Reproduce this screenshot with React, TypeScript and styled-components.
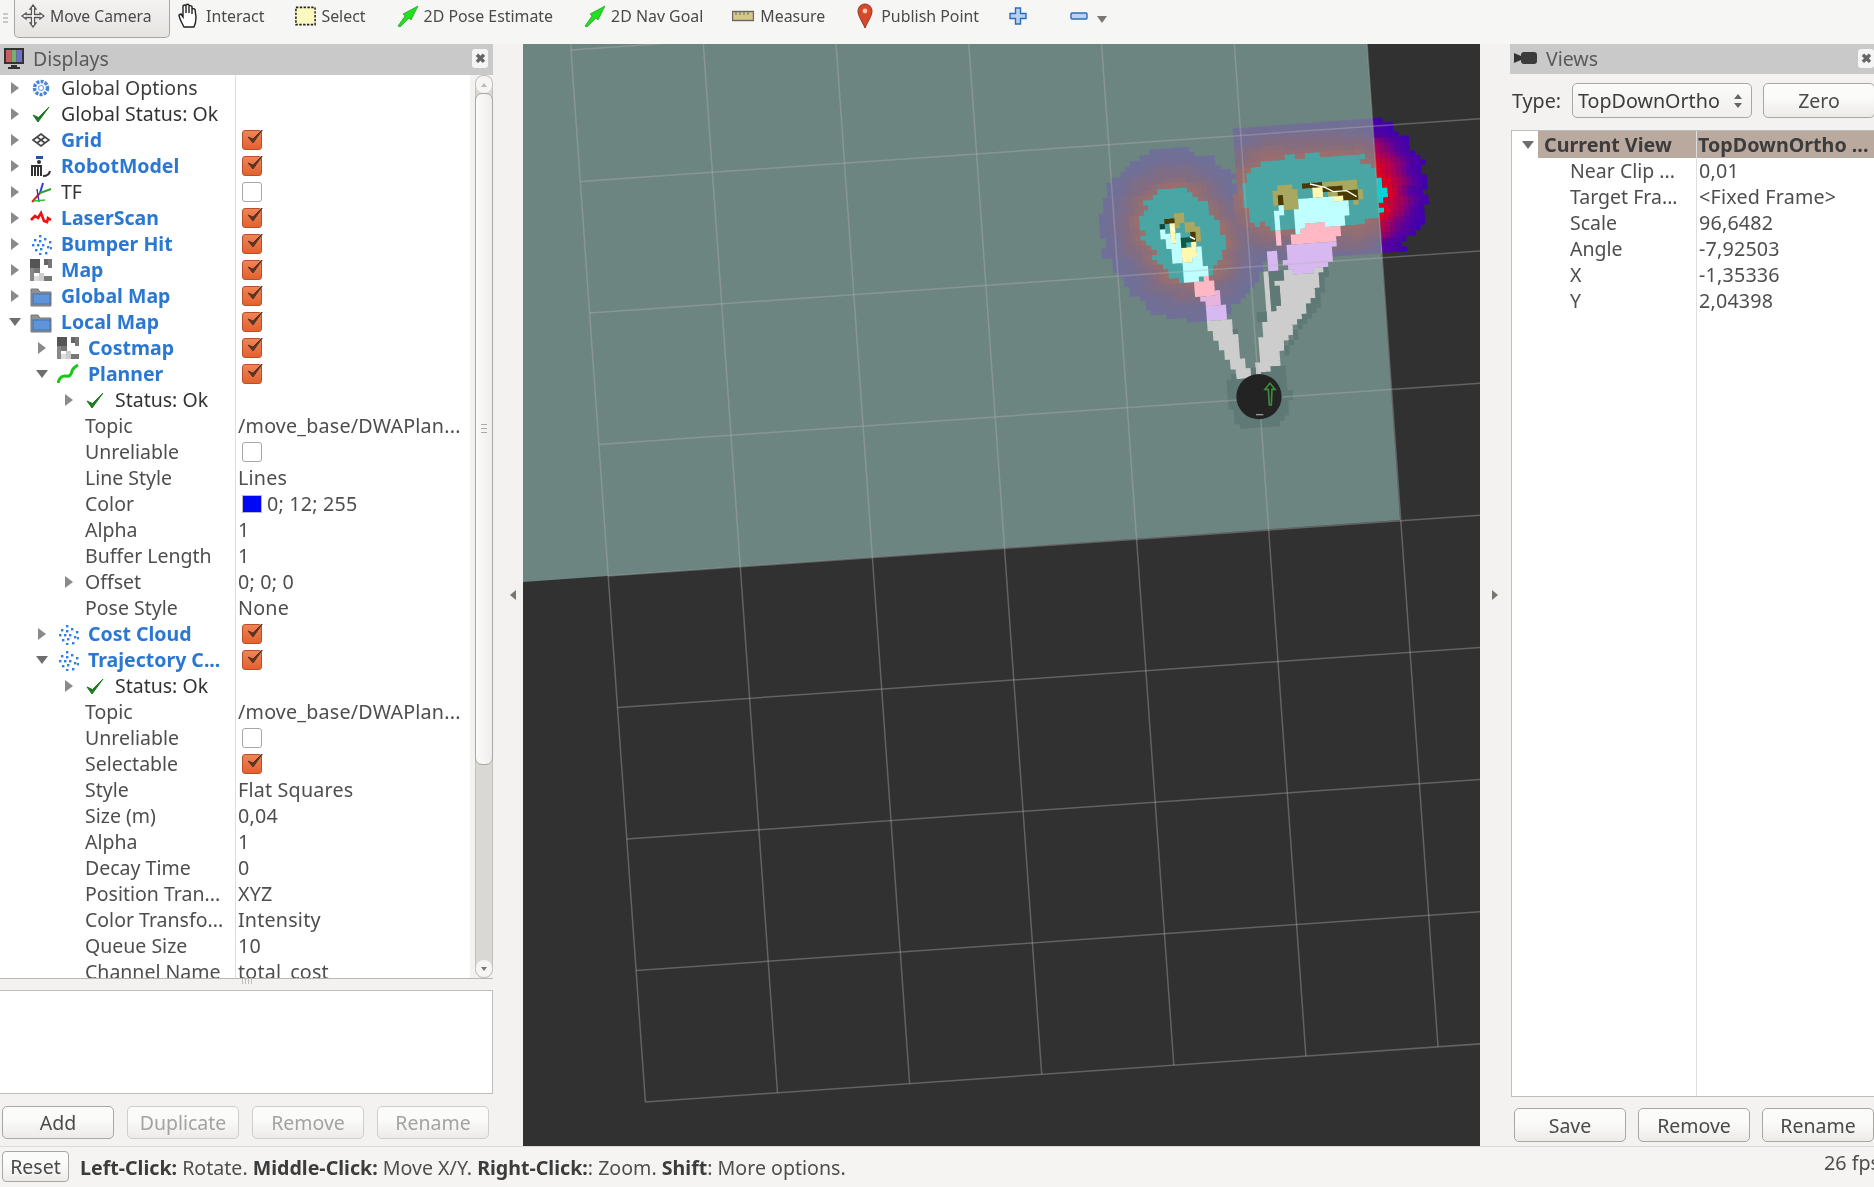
import React from 'react';
import styled, { createGlobalStyle } from 'styled-components';

const Global = createGlobalStyle`
  html, body { margin: 0; padding: 0; width: 1874px; height: 1187px; overflow: hidden; background: #f2f1f0; }
  #root { width: 1874px; height: 1187px; overflow: hidden; }
`;

const Window = styled.div`
  width: 1874px; height: 1187px; display: flex; flex-direction: column; overflow: hidden;
  background: #f3f2f1; color: #3c3c3c;
  font-family: "Noto Sans", "Open Sans", sans-serif; font-size: 19.7px;
  filter: blur(0.45px);
`;

/* ---------- toolbar ---------- */
const Toolbar = styled.div`
  height: 44px; flex: none; display: flex; align-items: flex-start; background: #f6f6f5; padding-left: 3px;
`;
const Handle = styled.div`
  width: 5px; height: 12px; margin-top: 13px; margin-right: 6px;
  background: repeating-linear-gradient(to bottom, #c9c9c9 0 2px, transparent 2px 4px);
`;
const ActiveTool = styled.div`
  width: 156px; height: 39px; box-sizing: border-box; margin-top: -1px; display: flex; align-items: center; padding: 0 0 4px 6px; gap: 5px;
  border: 1px solid #a8a6a2; border-top: none; border-radius: 0 0 5px 5px; background: linear-gradient(#f4f3f1, #e6e4e1);
  font-size: 15.7px; color: #4a4a4a;
`;
const Tool = styled.div<{ $left: number; $gap: number }>`
  display: flex; align-items: center; height: 32px; gap: ${p => p.$gap}px; margin-left: ${p => p.$left}px; font-size: 15.9px; color: #4a4a4a; white-space: nowrap;
`;
const DropTri = styled.svg`
  margin-top: 7px;
`;

/* ---------- layout ---------- */
const Main = styled.div`
  height: 1102px; flex: none; display: flex;
`;
const Panel = styled.div<{ $w: number }>`
  width: ${p => p.$w}px; flex: none; display: flex; flex-direction: column;
`;
const Splitter = styled.div`
  width: 30px; flex: none; display: flex; align-items: center; justify-content: center;
`;
const SplitArrow = styled.div<{ $right?: boolean }>`
  width: 0; height: 0; border-top: 5px solid transparent; border-bottom: 5px solid transparent;
  ${p => p.$right ? 'border-left: 6px solid #77756f;' : 'border-right: 6px solid #77756f; margin-left: 9px;'}
`;
const DockHeader = styled.div`
  height: 31px; flex: none; box-sizing: border-box; background: #c9c9c9; display: flex; align-items: center; padding: 0 5px 2px 3px; gap: 8px; color: #5a5a5a; font-size: 19.5px;
`;
const DockTitle = styled.span`
  flex: 1;
`;
const CloseBtn = styled.div`
  width: 16px; height: 19px; background: #f5f5f5; border-radius: 3px; color: #666; font-size: 13px; line-height: 19px; text-align: center; font-weight: 700;
`;
const RightClose = styled(CloseBtn)`
  margin-right: 3px;
`;

/* ---------- tree ---------- */
const TreeWrap = styled.div`
  height: 904px; flex: none; display: flex; border-bottom: 1px solid #b9b7b3; box-sizing: border-box;
`;
const Tree = styled.div<{ $col: number }>`
  position: relative; background: #fff; overflow: hidden; flex: 1;
  &::before { content: ""; position: absolute; left: ${p => p.$col}px; top: 0; bottom: 0; width: 1px; background: #dfdedc; }
`;
const Row = styled.div<{ $col: number }>`
  height: 26px; display: grid; grid-template-columns: ${p => p.$col + 1}px 1fr; align-items: center; white-space: nowrap;
`;
const NameCell = styled.div<{ $depth: number }>`
  display: flex; align-items: center; height: 26px; padding-left: ${p => 8 + p.$depth * 27}px; box-sizing: border-box; overflow: hidden;
`;
const ArrowSlot = styled.div`
  width: 14px; flex: none; display: flex; justify-content: center; margin-right: 8px;
`;
const Arrow = styled.div<{ $open?: boolean }>`
  width: 0; height: 0;
  ${p => p.$open
    ? 'border-left: 6px solid transparent; border-right: 6px solid transparent; border-top: 8px solid #6e6e6e;'
    : 'border-top: 6px solid transparent; border-bottom: 6px solid transparent; border-left: 8px solid #8a8a8a;'}
`;
const IconSlot = styled.div`
  width: 22px; height: 22px; flex: none; display: flex; align-items: center; justify-content: center; margin-right: 9px;
`;
const Label = styled.span<{ $kind: string }>`
  display: block; font-size: 19.5px; padding-bottom: 2px;
  ${p => p.$kind === 'link' ? 'color: #2b78d2; font-weight: 700;' : ''}
  ${p => p.$kind === 'status' ? 'color: #333;' : ''}
  ${p => p.$kind === 'prop' ? 'color: #4e4e4e; margin-left: 1px;' : ''}
`;
const ValueCell = styled.div`
  display: flex; align-items: center; padding-left: 2px; font-size: 19.7px; color: #4e4e4e; overflow: hidden; letter-spacing: 0.2px;
`;
const ValueText = styled.span`
  display: block; padding-bottom: 2px;
`;
const Check = styled.div<{ $on?: boolean }>`
  width: 20px; height: 20px; box-sizing: border-box; margin-left: 4px; border-radius: 3px; position: relative;
  border: 1px solid ${p => p.$on ? '#b84f2a' : '#a9a7a3'};
  background: ${p => p.$on ? 'linear-gradient(#f08455, #e2622f)' : '#fff'};
`;
const CheckMark = styled.svg`
  position: absolute; left: 1px; top: -4px; width: 21px; height: 21px;
`;
const Swatch = styled.div`
  width: 20px; height: 18px; background: #0008f5; margin: 0 5px 0 4px; border: 1px solid #bbb; box-sizing: border-box;
`;

/* ---------- scrollbar ---------- */
const ScrollBar = styled.div`
  width: 18px; flex: none; margin-left: 5px; display: flex; flex-direction: column; background: #d9d8d5; border-radius: 8px; border: 1px solid #c3c1bd; box-sizing: border-box;
`;
const ScrollBtn = styled.div`
  height: 17px; flex: none; display: flex; align-items: center; justify-content: center; background: #f6f5f4; border-radius: 8px;
`;
const ScrollTri = styled.div<{ $down?: boolean }>`
  width: 0; height: 0; border-left: 3px solid transparent; border-right: 3px solid transparent;
  ${p => p.$down ? 'border-top: 4px solid #777;' : 'border-bottom: 4px solid #bbb;'}
`;
const ScrollThumb = styled.div`
  height: 670px; flex: none; background: linear-gradient(to right, #fafaf9, #efeeec); border: 1px solid #a9a7a3; margin: 0 -1px; border-radius: 7px; display: flex; align-items: center; justify-content: center;
`;
const Grip = styled.div`
  width: 6px; height: 10px; background: repeating-linear-gradient(to bottom, #aaa 0 1px, transparent 1px 4px);
`;
const ScrollTrack = styled.div`
  flex: 1;
`;

/* ---------- bottom of docks ---------- */
const SplitGap = styled.div`
  height: 11px; flex: none; display: flex; justify-content: center;
`;
const HGrip = styled.div`
  width: 10px; height: 5px; background: repeating-linear-gradient(to right, #bbb 0 1px, transparent 1px 3px);
`;
const Description = styled.div`
  height: 104px; flex: none; background: #fff; border: 1px solid #c0beba; border-left: none; box-sizing: border-box;
`;
const ButtonRow = styled.div<{ $left: number; $top: number; $gap: number }>`
  display: flex; gap: ${p => p.$gap}px; margin-top: ${p => p.$top}px; padding-left: ${p => p.$left}px;
`;
const Btn = styled.div<{ $off?: boolean; $w?: number; $h?: number }>`
  width: ${p => p.$w ?? 112}px; height: ${p => p.$h ?? 33}px; flex: none; box-sizing: border-box; display: flex; align-items: center; justify-content: center;
  border: 1px solid ${p => p.$off ? '#d0ceca' : '#a9a7a3'}; border-radius: 5px;
  background: linear-gradient(#fbfbfa 40%, #ecebe8);
  color: ${p => p.$off ? '#a3a3a3' : '#4a4a4a'}; font-size: 19.5px;
`;

/* ---------- right dock ---------- */
const RightHeader = styled(DockHeader)`
  height: 30px; width: 372px; padding-left: 4px;
`;
const TypeRow = styled.div`
  display: flex; align-items: center; height: 35px; margin-top: 9px; padding-left: 2px; width: 380px;
`;
const TypeLabel = styled.span`
  width: 60px; flex: none; font-size: 19.7px;
`;
const Combo = styled.div`
  width: 180px; height: 35px; flex: none; box-sizing: border-box; border: 1px solid #a9a7a3; border-radius: 5px; display: flex; align-items: center; justify-content: space-between; padding: 0 9px 0 5px; background: linear-gradient(#fbfbfa, #f0efed); font-size: 19.7px;
`;
const Spin = styled.div`
  display: flex; flex-direction: column; gap: 4px;
`;
const ZeroBtn = styled(Btn)`
  margin-left: 11px; height: 35px; width: 112px;
`;
const RightTree = styled(Tree)`
  flex: none; height: 967px; width: 380px; margin-top: 12px; margin-left: 1px; border: 1px solid #c0beba; box-sizing: border-box;
`;
const HeadRow = styled.div`
  height: 27px; display: grid; grid-template-columns: 184px 1fr; align-items: center; white-space: nowrap; font-weight: 700; color: #3c3c3c;
`;
const HeadArrow = styled.div`
  display: flex; align-items: center; height: 27px; padding-left: 10px; background: linear-gradient(to right, #fff 26px, #b9a99e 26px);
`;
const HeadValue = styled.div`
  height: 27px; display: flex; align-items: center; padding-left: 2px; background: #b9a99e;
`;
const HeadTri = styled(Arrow)`
  margin-right: 10px; flex: none;
`;

/* ---------- status bar ---------- */
const StatusBar = styled.div`
  flex: 1; display: flex; border-top: 1px solid #dcdad6; padding: 4px 0 0 2px; box-sizing: border-box; position: relative; background: #f5f4f3;
`;
const ResetBtn = styled(Btn)`
  width: 67px; height: 31px; border-radius: 4px; margin-right: 11px;
`;
const StatusText = styled.div`
  line-height: 33px; font-size: 19.6px; color: #4e4e4e; white-space: nowrap; flex: 1;
  b { color: #3c3c3c; font-weight: 700; }
`;
const Fps = styled.div`
  width: 50px; flex: none; line-height: 24px; font-size: 19.7px; white-space: nowrap; overflow: hidden; color: #4e4e4e;
`;

/* ---------- icons ---------- */
const S = (p: React.SVGProps<SVGSVGElement>) => <svg width="22" height="22" viewBox="0 0 22 22" {...p} />;
const Dots = () => (
  <S>{[[9, 2], [4, 6], [9, 7], [14, 5], [19, 8], [2, 11], [7, 11], [12, 11], [17, 13], [5, 16], [10, 15], [20, 14], [9, 20], [15, 19]].map(([x, y], i) =>
    <rect key={i} x={x} y={y} width="2.4" height="2.4" fill="#2f7fe8" />)}</S>
);
const MapIcon = () => (
  <S>
    <rect x="0" y="0" width="10" height="9" fill="#555" /><rect x="14" y="0" width="4" height="6" fill="#666" /><rect x="18" y="0" width="4" height="9" fill="#777" />
    <rect x="0" y="9" width="4" height="13" fill="#888" /><rect x="4" y="9" width="6" height="5" fill="#777" /><rect x="4" y="17" width="5" height="5" fill="#ddd" /><rect x="13" y="17" width="9" height="5" fill="#777" /><rect x="9" y="14" width="5" height="8" fill="#ccc" />
  </S>
);
const Folder = () => (
  <S>
    <path d="M1 4 h7 l2 3 h11 v14 H1z" fill="#8e9092" stroke="#777" />
    <rect x="3" y="9" width="17" height="10" fill="#5f95d8" stroke="#3f72b8" />
  </S>
);
const Tick = () => (
  <S><path d="M3 12 L8 19 L19 4 L8.5 14.5z" fill="#1e7a1e" stroke="#1e7a1e" strokeWidth="1" /></S>
);
const icons: Record<string, React.ReactNode> = {
  gear: <S><circle cx="11" cy="11" r="6.5" fill="none" stroke="#4a86d8" strokeWidth="3.5" strokeDasharray="3 1.2" /><circle cx="11" cy="11" r="2.5" fill="none" stroke="#7aa8e8" strokeWidth="1.2" /></S>,
  check: <Tick />,
  grid: <S><path d="M3 11 L11 5 L19 11 L11 17z M7 8 L15 14 M15 8 L7 14" fill="none" stroke="#444" strokeWidth="1.6" /></S>,
  robot: <S><rect x="6" y="1" width="7" height="3" fill="#2b4fa0" /><circle cx="9" cy="7" r="2" fill="#333" /><path d="M2 21 V11 h9 V21 M5 11 v10 M8 11 v10 M13 21 q6 0 7 -5" stroke="#333" strokeWidth="2" fill="none" /></S>,
  tf: <S><path d="M10 12 L13 2" stroke="#2a3fd0" strokeWidth="2" fill="none" /><path d="M10 12 L21 8" stroke="#30a030" strokeWidth="2" fill="none" /><path d="M10 12 L2 21" stroke="#e02020" strokeWidth="2" fill="none" /><path d="M7 8 L9 21" stroke="#3030d0" strokeWidth="1.4" fill="none" /><path d="M4 20 L15 19" stroke="#30c030" strokeWidth="1.4" fill="none" /></S>,
  laser: <S><path d="M1 13 L5 9 L8 11 L11 6 L14 14 L17 15 L18 11 L21 13" stroke="#f01010" strokeWidth="2.6" fill="none" /></S>,
  dots: <Dots />,
  map: <MapIcon />,
  folder: <Folder />,
  path: <S><path d="M1 20 Q3 12 9 13 Q14 14 15 8 Q16 5 21 2" stroke="#18c818" strokeWidth="3" fill="none" /></S>,
};

const CheckTick = () => (
  <CheckMark viewBox="0 0 21 21"><path d="M4 10 L9 16 L19 2 L9 12z" fill="#5a3426" stroke="#5a3426" strokeWidth="1" /></CheckMark>
);

type Item = { d: number; name: string; kind: string; arrow?: 'o' | 'c'; icon?: string; chk?: boolean; val?: string; color?: boolean };
const items: Item[] = [
  { d: 0, name: 'Global Options', kind: 'plain', arrow: 'c', icon: 'gear' },
  { d: 0, name: 'Global Status: Ok', kind: 'status', arrow: 'c', icon: 'check' },
  { d: 0, name: 'Grid', kind: 'link', arrow: 'c', icon: 'grid', chk: true },
  { d: 0, name: 'RobotModel', kind: 'link', arrow: 'c', icon: 'robot', chk: true },
  { d: 0, name: 'TF', kind: 'status', arrow: 'c', icon: 'tf', chk: false },
  { d: 0, name: 'LaserScan', kind: 'link', arrow: 'c', icon: 'laser', chk: true },
  { d: 0, name: 'Bumper Hit', kind: 'link', arrow: 'c', icon: 'dots', chk: true },
  { d: 0, name: 'Map', kind: 'link', arrow: 'c', icon: 'map', chk: true },
  { d: 0, name: 'Global Map', kind: 'link', arrow: 'c', icon: 'folder', chk: true },
  { d: 0, name: 'Local Map', kind: 'link', arrow: 'o', icon: 'folder', chk: true },
  { d: 1, name: 'Costmap', kind: 'link', arrow: 'c', icon: 'map', chk: true },
  { d: 1, name: 'Planner', kind: 'link', arrow: 'o', icon: 'path', chk: true },
  { d: 2, name: 'Status: Ok', kind: 'status', arrow: 'c', icon: 'check' },
  { d: 2, name: 'Topic', kind: 'prop', val: '/move_base/DWAPlan...' },
  { d: 2, name: 'Unreliable', kind: 'prop', chk: false },
  { d: 2, name: 'Line Style', kind: 'prop', val: 'Lines' },
  { d: 2, name: 'Color', kind: 'prop', val: '0; 12; 255', color: true },
  { d: 2, name: 'Alpha', kind: 'prop', val: '1' },
  { d: 2, name: 'Buffer Length', kind: 'prop', val: '1' },
  { d: 2, name: 'Offset', kind: 'prop', val: '0; 0; 0', arrow: 'c' },
  { d: 2, name: 'Pose Style', kind: 'prop', val: 'None' },
  { d: 1, name: 'Cost Cloud', kind: 'link', arrow: 'c', icon: 'dots', chk: true },
  { d: 1, name: 'Trajectory C...', kind: 'link', arrow: 'o', icon: 'dots', chk: true },
  { d: 2, name: 'Status: Ok', kind: 'status', arrow: 'c', icon: 'check' },
  { d: 2, name: 'Topic', kind: 'prop', val: '/move_base/DWAPlan...' },
  { d: 2, name: 'Unreliable', kind: 'prop', chk: false },
  { d: 2, name: 'Selectable', kind: 'prop', chk: true },
  { d: 2, name: 'Style', kind: 'prop', val: 'Flat Squares' },
  { d: 2, name: 'Size (m)', kind: 'prop', val: '0,04' },
  { d: 2, name: 'Alpha', kind: 'prop', val: '1' },
  { d: 2, name: 'Decay Time', kind: 'prop', val: '0' },
  { d: 2, name: 'Position Tran...', kind: 'prop', val: 'XYZ' },
  { d: 2, name: 'Color Transfo...', kind: 'prop', val: 'Intensity' },
  { d: 2, name: 'Queue Size', kind: 'prop', val: '10' },
  { d: 2, name: 'Channel Name', kind: 'prop', val: 'total_cost' },
];

const TreeRow = ({ it }: { it: Item }) => (
  <Row $col={235}>
    <NameCell $depth={it.d}>
      <ArrowSlot>{it.arrow && <Arrow $open={it.arrow === 'o'} />}</ArrowSlot>
      {it.icon && <IconSlot>{icons[it.icon]}</IconSlot>}
      <Label $kind={it.kind}>{it.name}</Label>
    </NameCell>
    <ValueCell>
      {it.chk !== undefined && <Check $on={it.chk}>{it.chk && <CheckTick />}</Check>}
      {it.color && <Swatch />}
      {it.val && <ValueText>{it.val}</ValueText>}
    </ValueCell>
  </Row>
);

/* ---------- viewport picture ---------- */
type P = [number, number];
const inPoly = (x: number, y: number, poly: P[]) => {
  let c = false;
  for (let i = 0, j = poly.length - 1; i < poly.length; j = i++) {
    const [xi, yi] = poly[i]; const [xj, yj] = poly[j];
    if ((yi > y) !== (yj > y) && x < ((xj - xi) * (y - yi)) / (yj - yi) + xi) c = !c;
  }
  return c;
};
const segD = (x: number, y: number, a: P, b: P) => {
  const dx = b[0] - a[0], dy = b[1] - a[1];
  const t = Math.max(0, Math.min(1, ((x - a[0]) * dx + (y - a[1]) * dy) / (dx * dx + dy * dy)));
  return Math.hypot(x - a[0] - t * dx, y - a[1] - t * dy);
};
const lerpC = (a: number[], b: number[], t: number) => a.map((v, i) => Math.round(v + (b[i] - v) * t));
const ramp = (stops: [number, number[]][], d: number) => {
  for (let i = 1; i < stops.length; i++) {
    if (d <= stops[i][0]) {
      const t = Math.max(0, (d - stops[i - 1][0]) / (stops[i][0] - stops[i - 1][0]));
      return lerpC(stops[i - 1][1], stops[i][1], t);
    }
  }
  return stops[stops.length - 1][1];
};
const onMapRamp: [number, number[]][] = [[105, [158, 110, 106]], [150, [132, 108, 128]], [190, [116, 110, 148]], [240, [110, 112, 156]]];
const offMapRamp: [number, number[]][] = [[105, [235, 0, 20]], [150, [170, 0, 90]], [190, [90, 0, 160]], [240, [58, 0, 180]]];

const overlays: [string, P[]][] = [
  ['#5f7a76', [[450, 820], [610, 790], [635, 890], [615, 965], [530, 990], [470, 975], [435, 890]]],
  ['#5f7a76', [[440, 680], [465, 680], [485, 750], [470, 760]]],
  ['#5f7a76', [[535, 630], [560, 630], [560, 670], [535, 670]]],
  ['#5f7a76', [[720, 500], [745, 510], [715, 620], [670, 670], [620, 770], [600, 770], [640, 700]]],
  ['#cdcdcd', [[380, 665], [440, 640], [465, 700], [490, 780], [515, 830], [475, 830], [450, 790], [425, 750], [400, 710]]],
  ['#cdcdcd', [[555, 510], [730, 500], [700, 600], [660, 650], [620, 720], [590, 800], [528, 830], [545, 680], [568, 635], [552, 590]]],
  ['#5f7a76', [[572, 550], [595, 550], [595, 628], [580, 628]]],
  ['#5f7a76', [[572, 515], [610, 512], [610, 548], [572, 548]]],
  ['#ffb8c4', [[335, 555], [390, 525], [410, 600], [380, 625], [355, 590]]],
  ['#d8b8f0', [[380, 622], [435, 618], [435, 662], [385, 662]]],
  ['#e6b4de', [[365, 590], [412, 575], [420, 620], [380, 625]]],
  ['#c0ffff', [[240, 395], [300, 395], [330, 470], [365, 425], [370, 505], [388, 505], [388, 530], [315, 548], [305, 490], [285, 490], [265, 440], [240, 412]]],
  ['#fff8b0', [[262, 375], [285, 375], [285, 435], [268, 435]]],
  ['#fff8b0', [[305, 450], [345, 430], [345, 465], [325, 490], [305, 490]]],
  ['#a8a860', [[280, 335], [315, 335], [300, 390], [280, 390]]],
  ['#a8a860', [[318, 370], [340, 370], [362, 400], [362, 428], [320, 400]]],
  ['#4a3a00', [[258, 355], [280, 355], [280, 375], [258, 370]]],
  ['#0a4a40', [[240, 378], [260, 378], [260, 395], [240, 395]]],
  ['#0a5a4a', [[303, 410], [325, 410], [325, 448], [303, 448]]],
  ['#4a3a00', [[325, 390], [345, 390], [345, 430], [325, 430]]],
  ['#c0ffff', [[655, 290], [810, 300], [795, 375], [700, 375], [655, 405], [640, 405], [640, 325]]],
  ['#c0ffff', [[595, 315], [615, 315], [615, 350], [600, 350], [597, 392], [578, 392], [580, 350]]],
  ['#ffc0d0', [[600, 392], [600, 440], [585, 450], [580, 392]]],
  ['#ffb8c4', [[640, 405], [700, 365], [780, 380], [770, 420], [630, 440]]],
  ['#d8b8f0', [[625, 430], [770, 420], [745, 495], [665, 525], [610, 495]]],
  ['#d8b8f0', [[565, 450], [585, 450], [590, 510], [570, 510]]],
  ['#a8a860', [[570, 270], [630, 250], [655, 290], [655, 325], [620, 325], [575, 310]]],
  ['#a8a860', [[650, 245], [830, 240], [850, 290], [830, 315], [810, 295], [735, 280]]],
  ['#fff8b0', [[690, 262], [730, 262], [730, 285], [790, 280], [790, 300], [730, 292], [690, 285]]],
  ['#4a3a00', [[668, 248], [730, 245], [730, 265], [668, 265]]],
  ['#4a3a00', [[730, 262], [790, 260], [790, 280], [730, 280]]],
  ['#4a3a00', [[795, 275], [835, 275], [835, 295], [795, 295]]],
  ['#4a3a00', [[595, 292], [612, 292], [612, 310], [595, 310]]],
];

const buildCostPaths = () => {
  const size = 15;
  const ang = (-4.3 * Math.PI) / 180;
  const cos = Math.cos(ang), sin = Math.sin(ang);
  const out: Record<string, string> = {};
  for (let j = -6; j < 76; j++) {
    for (let i = -6; i < 80; i++) {
      const cx = (i + 0.5) * size, cy = (j + 0.5) * size;
      const x = cx * cos - cy * sin;
      const y = cx * sin + cy * cos;
      const noise = (Math.sin(Math.floor(i / 2) * 12.9898 + Math.floor(j / 2) * 78.233) * 43758.5453) % 1;
      const n = noise * 9;
      const d1 = segD(x, y, [285, 372], [330, 438]) + n;
      let d2 = segD(x, y, [590, 280], [810, 275]) + n;
      const yy = y + 0.075 * (x - 500);
      if (yy < 90 || yy > 490 || x < 465) d2 = 9999;
      const d = Math.min(d1 * (d1 > 105 ? 1.03 : 1), d2);
      const mapEdge = 872 + y * 0.0716;
      const onMap = x < mapEdge;
      let col: string | null = null;
      if (d < 105) col = onMap ? '#4aa6a4' : '#00d4d4';
      else if (d < 232) {
        const c = ramp(onMap ? onMapRamp : offMapRamp, d);
        col = `rgb(${c.join(',')})`;
      }
      for (const [c, poly] of overlays) if (inPoly(x, y, poly)) col = c;
      if (col) {
        out[col] = (out[col] || '') + `M${i * size} ${j * size}h${size + 0.5}v${size + 0.5}h-${size + 0.5}z`;
      }
    }
  }
  return out;
};

const gridLines = () => {
  const o: P = [645.4, 1102], u: P = [132.1, -9.2], v: P = [-9.3, -131.5];
  const lines: [number, number, number, number][] = [];
  for (let i = 0; i <= 8; i++) {
    const a: P = [o[0] + u[0] * i, o[1] + u[1] * i];
    lines.push([a[0], a[1], a[0] + v[0] * 9, a[1] + v[1] * 9]);
  }
  for (let k = 0; k <= 9; k++) {
    const a: P = [o[0] + v[0] * k, o[1] + v[1] * k];
    lines.push([a[0], a[1], a[0] + u[0] * 8, a[1] + u[1] * 8]);
  }
  return lines;
};

const Viewport = styled.svg`
  width: 957px; height: 1102px; flex: none; display: block; background: #313131;
`;

const Scene = () => {
  const paths = React.useMemo(buildCostPaths, []);
  const lines = React.useMemo(gridLines, []);
  return (
    <Viewport viewBox="523 44 957 1102">
      <polygon points="523,44 1367,44 1400,520 523,582" fill="#6d8581" />
      <g transform="translate(1080 100) scale(0.3333) rotate(-4.3)">
        {Object.entries(paths).map(([c, d]) => <path key={c} d={d} fill={c} />)}
      </g>
      <g transform="translate(1080 100) scale(0.3333)">
        <path d="M690 252 L735 262 L760 275 L800 272 L830 290" stroke="#fff" strokeWidth="4" fill="none" />
        <path d="M272 380 L285 395 M330 410 L345 418" stroke="#fff" strokeWidth="5" fill="none" />
      </g>
      {lines.map((l, i) => <line key={i} x1={l[0]} y1={l[1]} x2={l[2]} y2={l[3]} stroke="#b4b4b4" strokeOpacity="0.38" strokeWidth="1.5" />)}
      <g transform="translate(1080 100) scale(0.3333)">
        <circle cx="537" cy="890" r="68" fill="#232323" />
        <path d="M570 850 L555 868 L565 868 L568 915 L574 915 L576 868 L585 868z" fill="none" stroke="#3f8a3f" strokeWidth="5" />
        <rect x="528" y="942" width="22" height="4" fill="#999" />
      </g>
    </Viewport>
  );
};

const rightRows = [
  ['Near Clip ...', '0,01'], ['Target Fra...', '<Fixed Frame>'], ['Scale', '96,6482'], ['Angle', '-7,92503'], ['X', '-1,35336'], ['Y', '2,04398'],
];

const App = () => (
  <Window>
    <Global />
    <Toolbar>
      <Handle />
      <ActiveTool>
        <svg width="24" height="24" viewBox="0 0 24 24" fill="none" stroke="#555" strokeWidth="1.3"><path d="M12 1 L15 5 H13.5 V10.5 H19 V9 L23 12 L19 15 V13.5 H13.5 V19 H15 L12 23 L9 19 H10.5 V13.5 H5 V15 L1 12 L5 9 V10.5 H10.5 V5 H9z" fill="#fff" /></svg>
        Move Camera
      </ActiveTool>
      <Tool $left={8} $gap={6}>
        <svg width="22" height="26" viewBox="0 0 22 26" fill="#fff" stroke="#222" strokeWidth="1.4"><path d="M6 24 C3 18 1 15 1 12 L3 11 L5 14 V3 Q6.5 1 8 3 V10 V2 Q9.5 0.5 11 2 V10 V3 Q12.5 2 14 3.5 V11 V6 Q16 5 17 6.5 L18 14 Q18 20 16 24z" /></svg>
        Interact
      </Tool>
      <Tool $left={30} $gap={4}>
        <svg width="23" height="22" viewBox="0 0 24 22"><rect x="2" y="2" width="20" height="18" fill="#fbf8c0" stroke="#222" strokeWidth="1.6" strokeDasharray="2.5 1.5" /></svg>
        Select
      </Tool>
      <Tool $left={31} $gap={5}>
        <svg width="22" height="22" viewBox="0 0 22 22"><path d="M1 21 L8 11 L6 9 L21 1 L14 15 L12 13 L3 22z" fill="#20e020" stroke="#148a14" strokeWidth="0.6" /></svg>
        2D Pose Estimate
      </Tool>
      <Tool $left={31} $gap={5}>
        <svg width="22" height="22" viewBox="0 0 22 22"><path d="M1 21 L8 11 L6 9 L21 1 L14 15 L12 13 L3 22z" fill="#20e020" stroke="#148a14" strokeWidth="0.6" /></svg>
        2D Nav Goal
      </Tool>
      <Tool $left={29} $gap={6}>
        <svg width="22" height="12" viewBox="0 0 22 12"><rect x="0.5" y="1.5" width="21" height="9" fill="#d8c888" stroke="#666" strokeWidth="1.4" /><path d="M4 2v3M8 2v3M12 2v3M16 2v3" stroke="#666" /></svg>
        Measure
      </Tool>
      <Tool $left={32} $gap={8}>
        <svg width="16" height="26" viewBox="0 0 16 26"><path d="M8 25 C5 18 1 13 1 8 A7 7 0 0 1 15 8 C15 13 11 18 8 25z" fill="#d8482a" stroke="#8a3a20" /><circle cx="8" cy="8" r="2.4" fill="#f8c8a8" /></svg>
        Publish Point
      </Tool>
      <Tool $left={30} $gap={0}>
        <svg width="18" height="18" viewBox="0 0 18 18"><path d="M6.5 1 H11.5 V6.5 H17 V11.5 H11.5 V17 H6.5 V11.5 H1 V6.5 H6.5z" fill="#b8d2f0" stroke="#2f6cb8" strokeWidth="1.4" /></svg>
      </Tool>
      <Tool $left={43} $gap={8}>
        <svg width="18" height="8" viewBox="0 0 18 8"><rect x="1" y="1" width="16" height="6" rx="1" fill="#b8d2f0" stroke="#2f6cb8" strokeWidth="1.4" /></svg>
        <DropTri width="12" height="10" viewBox="0 0 12 10"><path d="M1 1 H11 L6 8z" fill="#777" /></DropTri>
      </Tool>
    </Toolbar>

    <Main>
      <Panel $w={493}>
        <DockHeader>
          <svg width="22" height="24" viewBox="0 0 22 24"><rect x="1" y="1" width="20" height="16" fill="#333" /><rect x="3" y="3" width="5.5" height="12" fill="#c86060" /><rect x="8.5" y="3" width="5" height="12" fill="#70b070" /><rect x="13.5" y="3" width="5.5" height="12" fill="#7070c8" /><path d="M8 18 h6 v2 h3 v2 H5 v-2 h3z" fill="#333" /></svg>
          <DockTitle>Displays</DockTitle>
          <CloseBtn>✖</CloseBtn>
        </DockHeader>
        <TreeWrap>
          <Tree $col={235}>
            {items.map((it, i) => <TreeRow key={i} it={it} />)}
          </Tree>
          <ScrollBar>
            <ScrollBtn><ScrollTri /></ScrollBtn>
            <ScrollThumb><Grip /></ScrollThumb>
            <ScrollTrack />
            <ScrollBtn><ScrollTri $down /></ScrollBtn>
          </ScrollBar>
        </TreeWrap>
        <SplitGap><HGrip /></SplitGap>
        <Description />
        <ButtonRow $left={2} $top={12} $gap={13}>
          <Btn>Add</Btn>
          <Btn $off>Duplicate</Btn>
          <Btn $off>Remove</Btn>
          <Btn $off>Rename</Btn>
        </ButtonRow>
      </Panel>
      <Splitter><SplitArrow /></Splitter>
      <Scene />
      <Splitter><SplitArrow $right /></Splitter>
      <Panel $w={364}>
        <RightHeader>
          <svg width="24" height="14" viewBox="0 0 24 14"><path d="M0 2 L7 5 V9 L0 12z" fill="#333" /><rect x="7" y="1" width="16" height="12" rx="3" fill="#3c3c3c" /></svg>
          <DockTitle>Views</DockTitle>
          <RightClose>✖</RightClose>
        </RightHeader>
        <TypeRow>
          <TypeLabel>Type:</TypeLabel>
          <Combo>
            TopDownOrtho
            <Spin>
              <svg width="8" height="5" viewBox="0 0 8 5"><path d="M0 5 L4 0 L8 5z" fill="#666" /></svg>
              <svg width="8" height="5" viewBox="0 0 8 5"><path d="M0 0 L8 0 L4 5z" fill="#666" /></svg>
            </Spin>
          </Combo>
          <ZeroBtn>Zero</ZeroBtn>
        </TypeRow>
        <RightTree $col={184}>
          <HeadRow>
            <HeadArrow><HeadTri $open />Current View</HeadArrow>
            <HeadValue>TopDownOrtho ...</HeadValue>
          </HeadRow>
          {rightRows.map(([n, v]) => (
            <Row key={n} $col={184}>
              <NameCell $depth={1}><ArrowSlot /><Label $kind="prop">{n}</Label></NameCell>
              <ValueCell><ValueText>{v}</ValueText></ValueCell>
            </Row>
          ))}
        </RightTree>
        <ButtonRow $left={4} $top={11} $gap={12}>
          <Btn $h={34}>Save</Btn>
          <Btn $h={34}>Remove</Btn>
          <Btn $h={34}>Rename</Btn>
        </ButtonRow>
      </Panel>
    </Main>

    <StatusBar>
      <ResetBtn>Reset</ResetBtn>
      <StatusText><b>Left-Click:</b> Rotate. <b>Middle-Click:</b> Move X/Y. <b>Right-Click:</b>: Zoom. <b>Shift</b>: More options.</StatusText>
      <Fps>26 fps</Fps>
    </StatusBar>
  </Window>
);

export default App;
